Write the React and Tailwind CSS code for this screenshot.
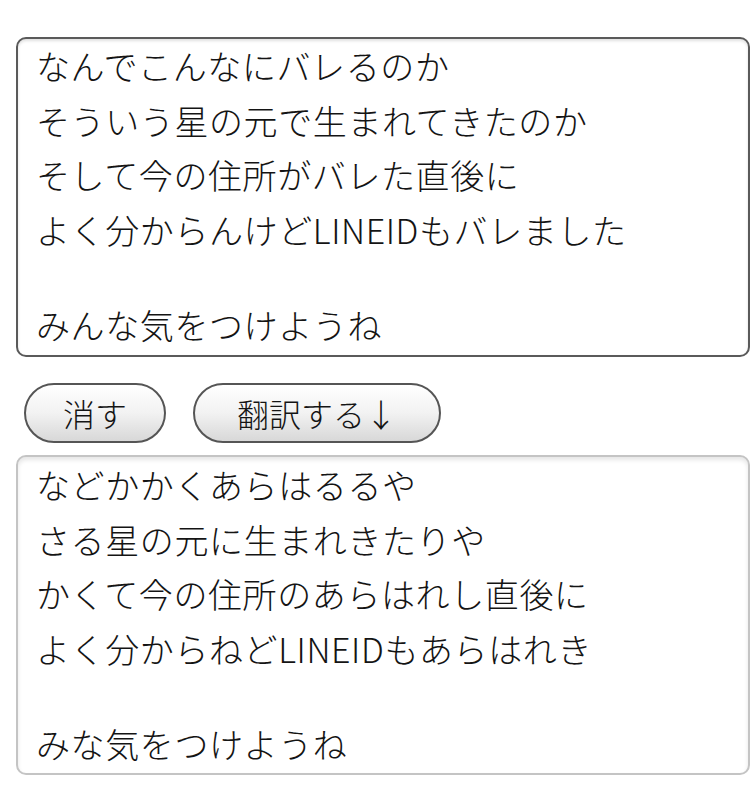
const FONT = "font-['Noto_Sans_CJK_JP','Noto_Sans',sans-serif] font-light";

const source = [
  "なんでこんなにバレるのか",
  "そういう星の元で生まれてきたのか",
  "そして今の住所がバレた直後に",
  "よく分からんけどLINEIDもバレました",
  "",
  "みんな気をつけようね",
];

const translated = [
  "などかかくあらはるるや",
  "さる星の元に生まれきたりや",
  "かくて今の住所のあらはれし直後に",
  "よく分からねどLINEIDもあらはれき",
  "",
  "みな気をつけようね",
];

function TextBox({ lines, dark }) {
  return (
    <div
      className={`h-[320px] rounded-[10px] border-2 bg-white px-[18px] ${
        dark
          ? "border-[#5a5a5a] pt-0 shadow-[inset_0_2px_3px_rgba(0,0,0,0.12)]"
          : "border-[#c4c4c4] pt-[1px] shadow-[inset_0_3px_4px_rgba(0,0,0,0.1)]"
      }`}
    >
      {lines.map((line, i) =>
        line === "" ? (
          <div key={i} className="h-[41px]" />
        ) : (
          <div key={i} className="h-[54.5px] text-[34px] leading-[54.5px] text-[#141414] whitespace-nowrap tracking-[0.6px]">
            {line}
          </div>
        )
      )}
    </div>
  );
}

function PillButton({ children, width }) {
  return (
    <button
      className={`${width} h-[60px] rounded-full border-2 border-[#555] bg-gradient-to-b from-white via-[#f2f2f2] to-[#d8d8d8] text-[32px] leading-none text-[#141414] flex items-center justify-center`}
    >
      {children}
    </button>
  );
}

export default function App() {
  return (
    <div className={`${FONT} w-[750px] h-[791px] bg-white pl-4 pt-[37px] overflow-hidden`}>
      <div className="w-[734px]">
        <TextBox lines={source} dark />
      </div>
      <div className="flex gap-[27px] pl-2 mt-[26px] mb-[12px]">
        <PillButton width="w-[142px]">消す</PillButton>
        <PillButton width="w-[248px]">翻訳する↓</PillButton>
      </div>
      <div className="w-[734px]">
        <TextBox lines={translated} />
      </div>
    </div>
  );
}
